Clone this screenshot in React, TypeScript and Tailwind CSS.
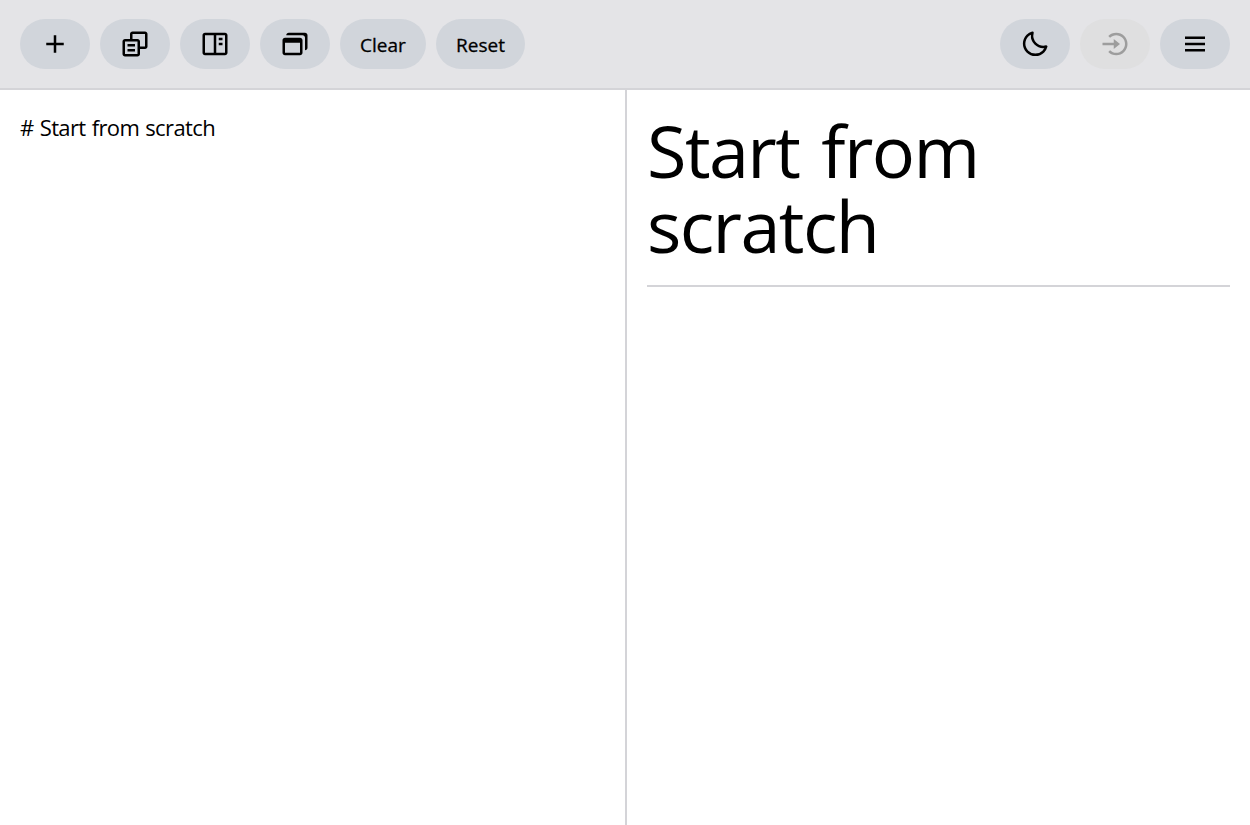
import type { ReactNode } from "react";
import {
  BiBookContent,
  BiCopyAlt,
  BiLogInCircle,
  BiMenu,
  BiMoon,
  BiPlus,
  BiWindows,
} from "react-icons/bi";

type ToolButtonProps = {
  label: string;
  children: ReactNode;
  disabled?: boolean;
};

function IconButton({ label, children, disabled = false }: ToolButtonProps) {
  return (
    <button
      aria-label={label}
      disabled={disabled}
      className="flex h-[50px] w-[70px] items-center justify-center rounded-full bg-[#d1d5db] text-3xl text-black disabled:bg-[#dfdfe0] disabled:text-[#9d9d9d]"
    >
      {children}
    </button>
  );
}

export default function App() {
  return (
    <div className="flex h-screen flex-col overflow-hidden bg-white font-['Open_Sans','Noto_Sans',sans-serif] text-black">
      <header className="flex h-[90px] shrink-0 items-center justify-between border-b-2 border-[#d4d4d8] bg-[#e4e4e7] px-5">
        <div className="flex gap-2.5">
          <IconButton label="New"><BiPlus /></IconButton>
          <IconButton label="Copy"><BiCopyAlt /></IconButton>
          <IconButton label="Split view"><BiBookContent /></IconButton>
          <IconButton label="Windows"><BiWindows /></IconButton>
          <button className="h-[50px] w-[86px] rounded-full bg-[#d1d5db] pt-0.5 text-[19px] font-medium [-webkit-text-stroke:0.3px_black]">
            Clear
          </button>
          <button className="h-[50px] w-[89px] rounded-full bg-[#d1d5db] pt-0.5 text-[19px] font-medium [-webkit-text-stroke:0.3px_black]">
            Reset
          </button>
        </div>
        <div className="flex gap-2.5">
          <IconButton label="Dark mode"><BiMoon /></IconButton>
          <IconButton label="Log in" disabled><BiLogInCircle /></IconButton>
          <IconButton label="Menu"><BiMenu /></IconButton>
        </div>
      </header>
      <main className="grid min-h-0 flex-1 grid-cols-2">
        <section className="px-5 pt-[19px]">
          <p className="text-[22px] leading-9 tracking-[-0.62px] [word-spacing:1px]"># Start from scratch</p>
        </section>
        <section className="border-l-2 border-[#d4d4d8] px-5 pt-[23px]">
          <h1 className="w-[400px] text-[72px] leading-[75px] tracking-[-1.6px] [word-spacing:5px]">
            Start from scratch
          </h1>
          <hr className="mt-[22px] border-t-2 border-[#d4d4d8]" />
        </section>
      </main>
    </div>
  );
}
